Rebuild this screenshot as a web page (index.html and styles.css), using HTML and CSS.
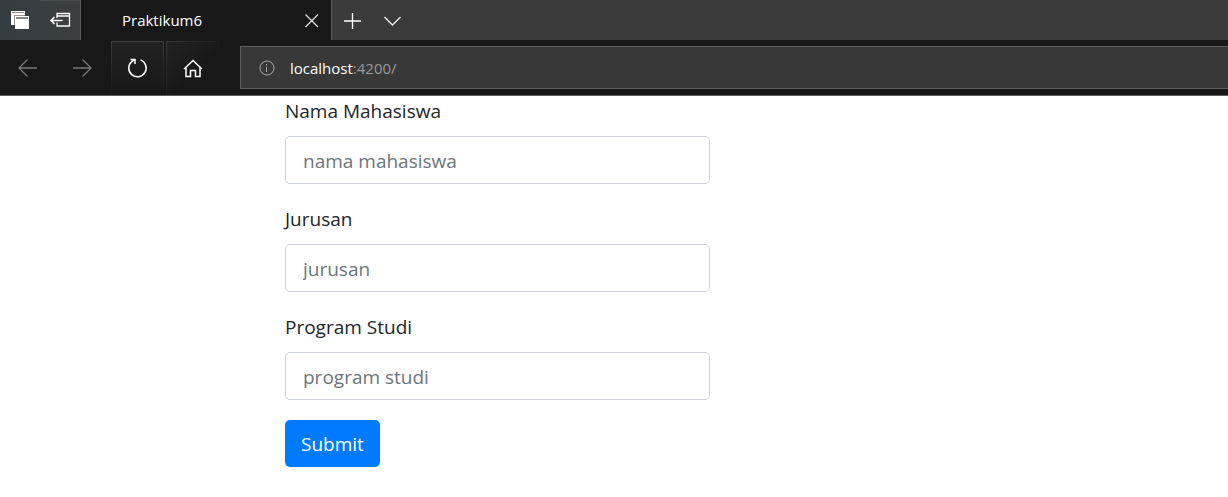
FILE: index.html
```html
<!DOCTYPE html>
<html lang="id">
<head>
<meta charset="utf-8">
<title>Praktikum6</title>
<link rel="stylesheet" href="styles.css">
</head>
<body>
<header class="browser">
  <div class="tabs">
    <div class="tab-tools">
      <button class="tool" type="button" aria-label="Tabs set aside">
        <svg width="40" height="40" viewBox="0 0 40 40"><path fill="#fff" d="M11 11h14v5h4v13H15v-4h-4z"/><path fill="#888" d="M12 12h12v1H12zM16 17h12v2H16z"/><path fill="none" stroke="#999" d="M14.500 25v-9.500H25"/></svg>
      </button>
      <button class="tool tool-edge" type="button" aria-label="Set tabs aside">
        <svg width="40" height="40" viewBox="0 0 40 40" fill="none" stroke="#fff"><path stroke-width="1.300" d="M17 18v-4.500h12.500v12.500H17v-3.500M17 16h12"/><path stroke-width="1.500" d="M22.500 20.500H11M14.500 17L11 20.500l3.500 3.500"/></svg>
      </button>
    </div>
    <div class="tab">
      <span>Praktikum6</span>
      <button class="close" type="button" aria-label="Close tab">
        <svg width="40" height="40" viewBox="0 0 40 40" fill="none" stroke="#ddd" stroke-width="1.300"><path d="M14.500 14.500L27 27M27 14.500L14.500 27"/></svg>
      </button>
    </div>
    <button class="tool" type="button" aria-label="New tab">
      <svg width="40" height="40" viewBox="0 0 40 40" fill="none" stroke="#fff"><path stroke-width="1.300" d="M12 21h17M20.500 13v16"/></svg>
    </button>
    <button class="tool" type="button" aria-label="Tab previews">
      <svg width="40" height="40" viewBox="0 0 40 40" fill="none" stroke="#eee" stroke-width="1.300"><path d="M12.500 17l8 8 8-8"/></svg>
    </button>
  </div>
  <div class="navigation">
    <button class="nav" type="button" aria-label="Back">
      <svg width="55" height="54" viewBox="0 0 55 54" fill="none" stroke="#777" stroke-width="1.300"><path d="M37 27H19M27.500 18.500L19 27l8.500 8.500"/></svg>
    </button>
    <button class="nav" type="button" aria-label="Forward">
      <svg width="55" height="54" viewBox="0 0 55 54" fill="none" stroke="#777" stroke-width="1.300"><path d="M18 27h18M27.500 18.500L36 27l-8.500 8.500"/></svg>
    </button>
    <button class="nav lit" type="button" aria-label="Refresh">
      <svg width="53" height="54" viewBox="0 0 53 54" fill="none" stroke="#fff" stroke-width="1.500"><path d="M29.500 18.900A8.700 8.700 0 1 1 21 20.300L24 18.500M19.500 18.500H24V23"/></svg>
    </button>
    <button class="nav lit lit-fade" type="button" aria-label="Home">
      <svg width="53" height="54" viewBox="0 0 53 54" fill="none" stroke="#fff" stroke-width="1.500"><path d="M18 28l9-8.500 9 8.500M20 26.500v9h4.500v-6h5v6H34v-9"/></svg>
    </button>
    <div class="address">
      <svg width="16" height="16" viewBox="0 0 16 16" fill="none" stroke="#aaa"><circle cx="8" cy="8" r="7"/><path d="M7.500 7v5M7.500 4v1.500"/></svg>
      <span class="url"><b>localhost</b>:4200/</span>
    </div>
  </div>
</header>
<main>
  <form class="form">
    <div class="group">
      <label for="nama">Nama Mahasiswa</label>
      <input id="nama" type="text" placeholder="nama mahasiswa">
    </div>
    <div class="group">
      <label for="jurusan">Jurusan</label>
      <input id="jurusan" type="text" placeholder="jurusan">
    </div>
    <div class="group">
      <label for="prodi">Program Studi</label>
      <input id="prodi" type="text" placeholder="program studi">
    </div>
    <button class="submit" type="submit">Submit</button>
  </form>
</main>
</body>
</html>
```
FILE: styles.css
```css
* {
  box-sizing: border-box;
}

body {
  margin: 0;
  background: #fff;
  color: #212529;
  font-family: "Open Sans", "Noto Sans", sans-serif;
}

button {
  padding: 0;
  border: 0;
  background: none;
  font: inherit;
}

svg {
  display: block;
}

.browser {
  background: #181818;
  border-bottom: 1px solid #5c5c5c;
  color: #fff;
  font-size: 15px;
}

.tabs {
  display: flex;
  height: 40px;
  background: #3b3b3b;
}

.tab-tools {
  display: flex;
  width: 81px;
  background: linear-gradient(90deg, #343d40, #3c3f41);
  border-right: 1px solid #5a5a5a;
}

.tool-edge {
  box-shadow: inset 0 1px #4b4e50;
}

.tab {
  display: flex;
  align-items: center;
  justify-content: space-between;
  width: 251px;
  padding-left: 41px;
  background: #181818;
  border-right: 1px solid #5a5a5a;
}

.navigation {
  display: flex;
  height: 55px;
}

.nav {
  width: 55px;
}

.lit {
  margin: 1px 1px 0;
  width: 53px;
  border: 1px solid;
  border-image: linear-gradient(#3c3c3c, #181818) 1;
  background: linear-gradient(#222, #181818);
}

.lit svg {
  margin: -1px;
}

.lit-fade {
  border-image: linear-gradient(135deg, #3c3c3c, #181818 60%) 1;
  background: linear-gradient(135deg, #222, #181818 60%);
}

.address {
  display: flex;
  flex: 1;
  align-items: center;
  gap: 15px;
  margin: 6px 0 6px 20px;
  padding-left: 18px;
  background: #383838;
  border: 1px solid #5c5c5c;
  border-right: 0;
}

.url {
  color: #999;
}

.url b {
  color: #fff;
  font-weight: 400;
}

.form {
  max-width: 710px;
  padding-left: 285px;
  font-size: 19px;
  line-height: 30px;
}

.group {
  display: flex;
  flex-direction: column;
  gap: 10px;
  margin-bottom: 20px;
}

input {
  width: 100%;
  height: 48px;
  padding: 2px 17px 0;
  border: 1px solid #ced4da;
  border-radius: 5px;
  background: #fff;
  color: #495057;
  font: inherit;
}

input::placeholder {
  color: #6c757d;
  opacity: 1;
}

.submit {
  height: 47px;
  padding: 0 16px;
  border-radius: 5px;
  background: #007bff;
  color: #fff;
}
```
